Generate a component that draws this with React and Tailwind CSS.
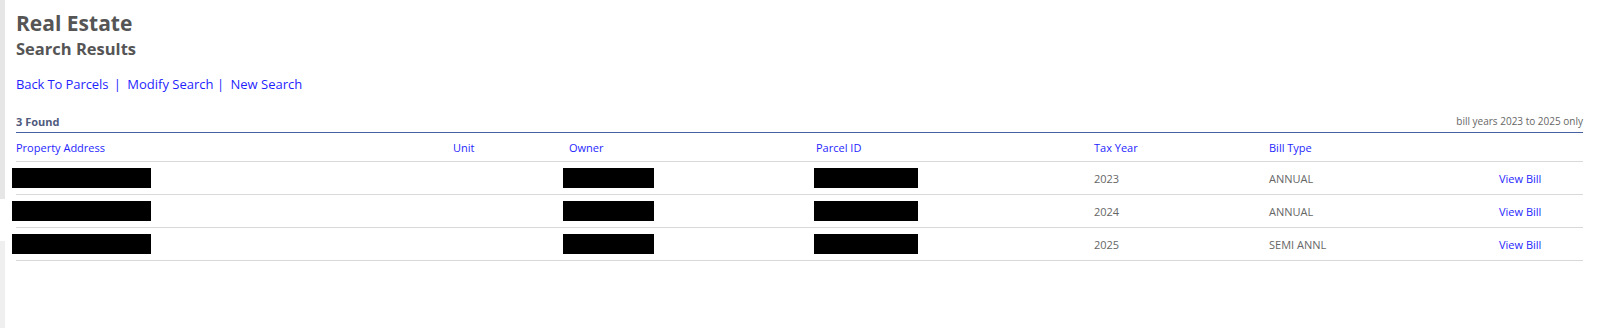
import React from 'react';

const rows = [
  { year: '2023', type: 'ANNUAL' },
  { year: '2024', type: 'ANNUAL' },
  { year: '2025', type: 'SEMI ANNL' },
];

const cols = 'grid grid-cols-[437px_116px_247px_278px_175px_230px_1fr] items-center';

const Sep = ({ className }) => (
  <span className={`inline-flex w-[4px] justify-center ${className}`}>|</span>
);

const App = () => {
  return (
    <div className="flex min-h-screen bg-white font-['Open_Sans',sans-serif]">
      {/* left gutter strip */}
      <div className="flex w-[5px] shrink-0 flex-col">
        <div className="h-[199px] bg-[#e6e6e6]" />
        <div className="h-[42px] bg-white" />
        <div className="flex-1 bg-[#efefef]" />
      </div>

      <div className="flex-1 pl-[11px] pr-[16px]">
        <h1 className="mt-[9px] text-[21px] leading-[28px] font-bold text-[#555555]">Real Estate</h1>
        <h2 className="mt-[1px] text-[16.5px] leading-[22px] font-bold text-[#555555]">Search Results</h2>

        <div className="mt-[15px] flex items-baseline text-[13px] leading-[18px] text-[#1f1fff]">
          <a href="#" className="tracking-[-0.1px]">Back To Parcels</a>
          <Sep className="ml-[7px] mr-[8px]" />
          <a href="#">Modify Search</a>
          <Sep className="ml-[5px] mr-[8px]" />
          <a href="#">New Search</a>
        </div>

        <div className="mt-[21px] flex items-end justify-between border-b border-[#4561a1] pb-[3px]">
          <span className="text-[11px] leading-[15px] font-bold text-[#4f5a7c]">3 Found</span>
          <span className="text-[10px] leading-[15px] text-[#666666]">bill years 2023 to 2025 only</span>
        </div>

        <div className={`${cols} h-[29px] border-b border-[#d9d9d9] text-[11px] leading-[15px] text-[#1f1fff]`}>
          <span>Property Address</span>
          <span>Unit</span>
          <span>Owner</span>
          <span>Parcel ID</span>
          <span>Tax Year</span>
          <span>Bill Type</span>
          <span />
        </div>

        {rows.map((r) => (
          <div
            key={r.year}
            className={`${cols} h-[33px] border-b border-[#d9d9d9] text-[11px] leading-[15px] text-[#666666]`}
          >
            <div className="-ml-[4px] h-[20px] w-[139px] bg-black" />
            <span />
            <div className="-ml-[6px] h-[20px] w-[91px] bg-black" />
            <div className="-ml-[2px] h-[20px] w-[104px] bg-black" />
            <span>{r.year}</span>
            <span>{r.type}</span>
            <a href="#" className="text-[#1f1fff]">View Bill</a>
          </div>
        ))}
      </div>
    </div>
  );
};

export default App;
